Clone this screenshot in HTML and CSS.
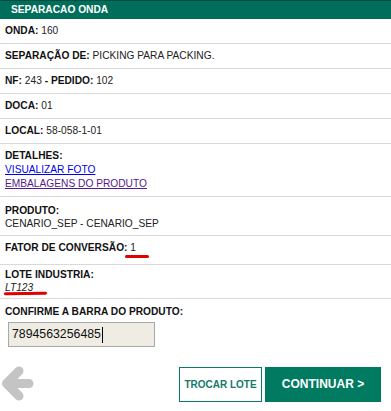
FILE: index.html
```html
<!DOCTYPE html>
<html lang="pt">
<head>
<meta charset="utf-8">
<title>Separacao Onda</title>
<link rel="stylesheet" href="styles.css">
</head>
<body>
<div class="screen">
  <header class="title-bar">SEPARACAO ONDA</header>
  <div class="row row-first"><b>ONDA:</b> <span class="val">160</span></div>
  <div class="row"><b>SEPARAÇÃO DE:</b> <span class="val">PICKING PARA PACKING.</span></div>
  <div class="row"><b>NF:</b> <span class="val">243</span> <b>- PEDIDO:</b> <span class="val">102</span></div>
  <div class="row"><b>DOCA:</b> <span class="val">01</span></div>
  <div class="row"><b>LOCAL:</b> <span class="val">58-058-1-01</span></div>
  <div class="row row-details">
    <b>DETALHES:</b><br>
    <a class="link" href="#foto">VISUALIZAR FOTO</a><br>
    <a class="link visited" href="#embalagens">EMBALAGENS DO PRODUTO</a>
  </div>
  <div class="row row-product"><b>PRODUTO:</b><br><span class="val">CENARIO_SEP - CENARIO_SEP</span></div>
  <div class="row row-factor"><b>FATOR DE CONVERSÃO:</b> <span class="val">1</span><span class="mark mark-factor"></span></div>
  <div class="row row-lot"><b>LOTE INDUSTRIA:</b><br><i class="val">LT123</i><span class="mark mark-lot"></span></div>
  <div class="confirm">
    <b>CONFIRME A BARRA DO PRODUTO:</b>
    <div class="barcode-field" role="textbox">7894563256485<span class="caret"></span></div>
  </div>
  <div class="actions">
    <button class="back" type="button" aria-label="Voltar">
      <svg width="36" height="36" viewBox="0 0 36 36"><path d="M19 5 L6.5 17.5 L19 30 M8 17.5 H29" fill="none" stroke="#c4c4c4" stroke-width="9" stroke-linecap="round" stroke-linejoin="round"/></svg>
    </button>
    <div class="spacer"></div>
    <button class="btn btn-outline" type="button">TROCAR LOTE</button>
    <button class="btn btn-primary" type="button">CONTINUAR &gt;</button>
  </div>
</div>
</body>
</html>
```
FILE: styles.css
```css
* { box-sizing: border-box; }
html, body { margin: 0; padding: 0; background: #fff; }
body {
  font-family: "Liberation Sans", Arial, sans-serif;
  font-size: 10.2px;
  color: #111;
}
.screen { width: 391px; }
.title-bar {
  height: 19px;
  background: #006e5b;
  border-top: 1px solid #004c3e;
  color: #fff;
  font-weight: bold;
  font-size: 10.2px;
  line-height: 18px;
  padding-left: 11px;
}
.row {
  position: relative;
  padding: 5px 5px 5px;
  line-height: 14px;
  border-bottom: 1px solid #d9d9d9;
}
.row-first { padding-top: 5px; }
.row b { font-weight: bold; color: #111; }
.val { color: #222; }
.row-details { padding: 5px 5px 5px; }
.link { color: #0000ee; text-decoration: underline; }
.link.visited { color: #551a8b; }
.row-product { padding: 7px 5px 5px; line-height: 13px; }
.row-factor { padding: 5px 5px 9px; }
.row-lot { padding: 3px 5px 4px; line-height: 13px; }
.mark {
  position: absolute;
  height: 3px;
  background: #e30000;
  border-radius: 2px;
}
.mark-factor { left: 125px; top: 19px; width: 24px; }
.mark-lot { left: 4px; top: 27px; width: 43px; transform: rotate(-1deg); }
.confirm {
  padding: 6px 5px 0;
  line-height: 13px;
}
.barcode-field {
  margin: 4px 0 0 3px;
  width: 147px;
  height: 25px;
  background: #efede3;
  border: 1px solid #a9a9a9;
  font-size: 12.3px;
  line-height: 23px;
  padding-left: 3px;
  color: #111;
  display: flex;
  align-items: center;
}
.caret {
  display: inline-block;
  width: 1px;
  height: 16px;
  background: #000;
  margin-left: 1px;
}
.actions {
  display: flex;
  align-items: center;
  margin-top: 19px;
  padding-right: 10px;
}
.back {
  border: 0;
  background: none;
  padding: 0;
  margin-left: 0;
  width: 36px;
  height: 36px;
  display: block;
}
.back svg { display: block; }
.spacer { flex: 1; }
.btn {
  height: 35px;
  font-family: "Liberation Sans", Arial, sans-serif;
  font-weight: bold;
  cursor: pointer;
  padding: 0;
}
.btn-outline {
  width: 83px;
  background: #fff;
  border: 1px solid #0a7a62;
  color: #167a69;
  font-size: 10px;
  margin-right: 3px;
}
.btn-primary {
  width: 116px;
  background: #007b62;
  border: 0;
  color: #fff;
  font-size: 12px;
}
```
